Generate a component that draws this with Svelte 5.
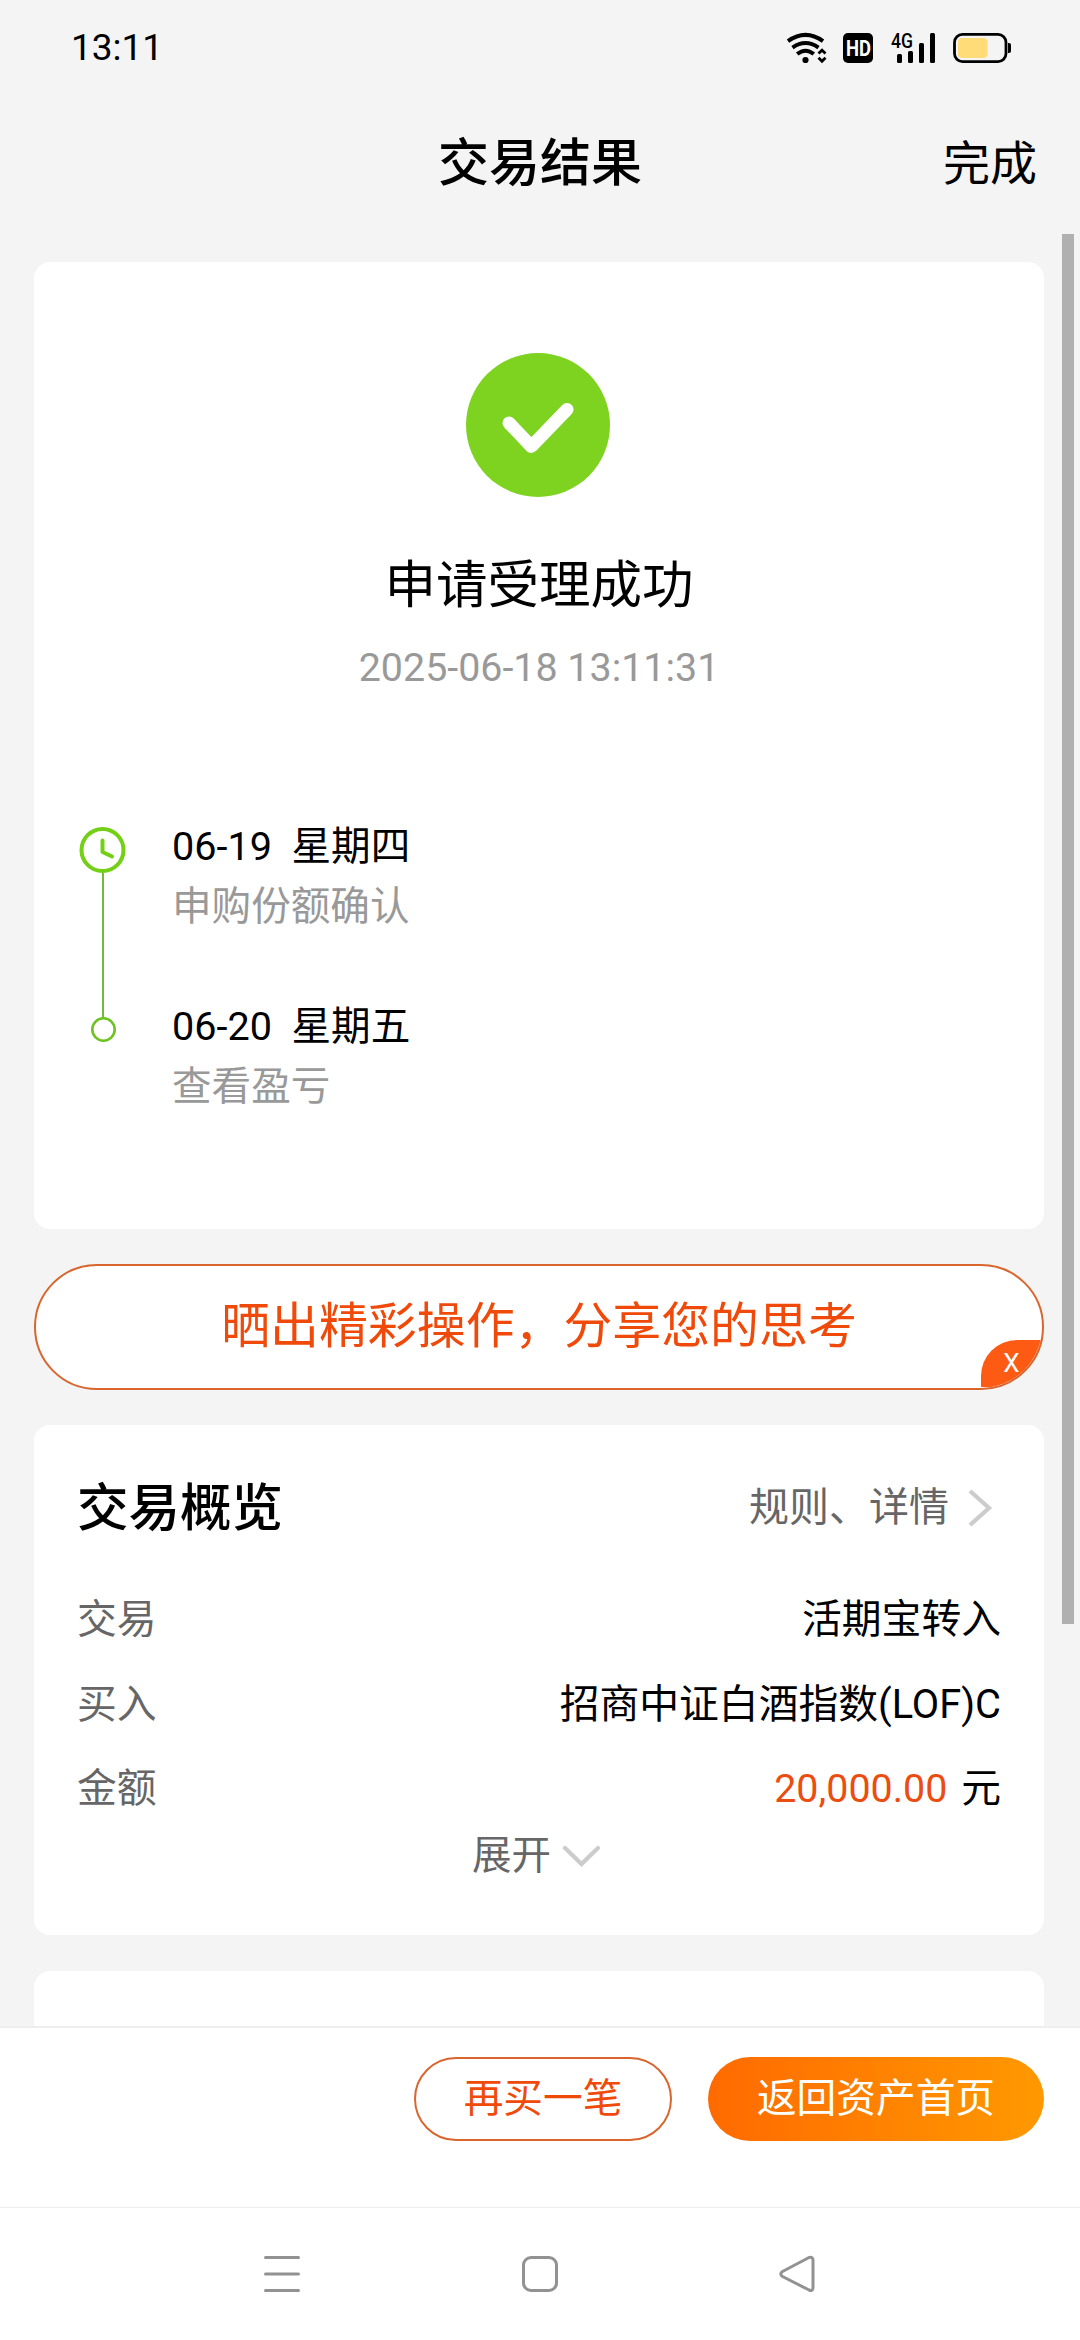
<style>
    :global(body) {
        background: #f4f4f4;
        font-family: Roboto, "Noto Sans CJK SC", sans-serif;
        color: #000;
    }
    .page {
        display: flex;
        flex-direction: column;
        width: 1080px;
        height: 2340px;
        overflow: hidden;
    }
    svg {
        display: block;
        flex: none;
        overflow: visible;
    }
    button {
        font-family: inherit;
        padding: 0;
        cursor: pointer;
    }

    .status {
        display: flex;
        justify-content: space-between;
        align-items: center;
        height: 96px;
        padding: 0 68px 0 71px;
    }
    .time {
        font-size: 37px;
        line-height: 44px;
    }
    .status-icons {
        display: flex;
        align-items: center;
        gap: 18px;
    }

    .header {
        display: grid;
        grid-template-columns: 1fr auto 1fr;
        align-items: center;
        height: 136px;
        padding: 0 43px;
        margin-bottom: 2px;
    }
    .header h1 {
        grid-column: 2;
        margin: 0;
        font-size: 51px;
        font-weight: 500;
        line-height: 60px;
    }
    .done {
        justify-self: end;
        border: none;
        background: transparent;
        font-size: 47px;
        line-height: 60px;
        color: #000;
    }

    .content {
        position: relative;
        display: flex;
        flex-direction: column;
        height: 1792px;
        flex: none;
        box-sizing: border-box;
        padding: 28px 36px 0 34px;
        overflow: hidden;
    }
    .scrollbar {
        position: absolute;
        top: 0;
        right: 6px;
        width: 12px;
        height: 1390px;
        background: #b0b0b0;
    }
    .card {
        flex: none;
        box-sizing: border-box;
        background: #fff;
        border-radius: 16px;
    }

    .result {
        display: flex;
        flex-direction: column;
        align-items: center;
        height: 967px;
        padding-top: 91px;
    }
    .result h2 {
        margin: 59px 0 28px;
        font-size: 51.5px;
        font-weight: 400;
        line-height: 60px;
    }
    .stamp {
        font-size: 39.4px;
        line-height: 48px;
        color: #999;
    }
    .steps {
        align-self: stretch;
        margin: 125px 0 0;
        padding: 0 0 0 45px;
        list-style: none;
    }
    .step {
        display: flex;
        gap: 45px;
        height: 180px;
    }
    .rail {
        display: flex;
        flex-direction: column;
        align-items: center;
        width: 48px;
        padding-top: 10px;
    }
    .step:last-child .rail {
        padding-top: 20px;
    }
    .line {
        width: 2px;
        flex: 1;
        margin-bottom: -21px;
        background: #74b83c;
    }
    .step-text {
        font-size: 39.6px;
        line-height: 60px;
    }
    .date {
        white-space: pre;
    }
    .note {
        color: #999;
    }

    .share {
        position: relative;
        flex: none;
        box-sizing: border-box;
        height: 126px;
        margin: 35px 0;
        border: 2px solid #d9652f;
        border-radius: 63px;
        background: #fff;
        overflow: hidden;
        font-size: 48.9px;
        line-height: 122px;
        text-align: center;
        color: #f04a0a;
    }
    .close {
        position: absolute;
        right: 0;
        bottom: 1px;
        width: 61px;
        height: 47px;
        box-sizing: border-box;
        border: none;
        border-radius: 36px 0 0 0;
        background: #fd5b14;
        color: #fff;
        font-size: 26px;
        line-height: 47px;
    }

    .overview {
        height: 510px;
        padding: 41px 43px 0 43px;
        margin-bottom: 36px;
    }
    .overview-head {
        display: flex;
        justify-content: space-between;
        align-items: center;
        height: 86px;
        margin-bottom: 26px;
    }
    .overview h2 {
        margin: 0;
        font-size: 51.5px;
        font-weight: 500;
        line-height: 60px;
    }
    .rules {
        display: flex;
        align-items: center;
        gap: 19px;
        padding-right: 9px;
        margin-top: -2px;
        font-size: 40px;
        line-height: 48px;
        color: #666;
    }
    .row {
        display: flex;
        justify-content: space-between;
        font-size: 39.8px;
        line-height: 84.5px;
    }
    .row .label {
        color: #666;
    }
    .money {
        margin-right: 4px;
        font-size: 39.4px;
        color: #eb4d10;
    }
    .expand {
        display: flex;
        justify-content: center;
        align-items: center;
        gap: 12px;
        height: 48px;
        padding-right: 6px;
        font-size: 39.5px;
        line-height: 48px;
        color: #666;
    }
    .next {
        height: 120px;
    }

    .actions {
        display: flex;
        justify-content: flex-end;
        gap: 36px;
        height: 181px;
        box-sizing: border-box;
        padding: 29px 36px 0;
        border-top: 2px solid #eee;
        background: #fff;
    }
    .btn {
        box-sizing: border-box;
        height: 84px;
        border-radius: 42px;
        font-size: 39.7px;
        line-height: 80px;
    }
    .again {
        width: 258px;
        border: 2px solid #d9652f;
        background: #fff;
        color: #f04a0a;
    }
    .home {
        width: 336px;
        border: none;
        background: linear-gradient(90deg, #ff6a00, #ff9900);
        color: #fff;
    }

    .system-nav {
        display: flex;
        justify-content: center;
        gap: 218px;
        flex: 1;
        padding-top: 46px;
        border-top: 1px solid #eee;
        background: #fff;
    }
</style>

<script>
    const steps = [
        {date: '06-19', day: '星期四', note: '申购份额确认'},
        {date: '06-20', day: '星期五', note: '查看盈亏'},
    ]

    const rows = [
        {label: '交易', value: '活期宝转入'},
        {label: '买入', value: '招商中证白酒指数(LOF)C'},
        {label: '金额', money: '20,000.00', value: '元'},
    ]
</script>

<div class="page">
    <div class="status">
        <span class="time">13:11</span>
        <div class="status-icons">
            <svg width="38" height="30" viewBox="0 0 38 30" fill="none" stroke="#000" stroke-width="4">
                <path d="M1 8.2Q18.5 -4.4 36 8.2" />
                <path d="M5.5 14.6Q18.5 5.4 31.5 14.6" />
                <path d="M10.2 21Q18.5 14.4 26.8 21" />
                <circle cx="18.5" cy="27" r="3.1" fill="#000" stroke="none" />
                <path d="M31.5 20.5l3.5-3.3 3.5 3.3M31.5 24.8l3.5 3.5 3.5-3.5" stroke-width="2.8" />
            </svg>
            <svg width="30" height="30" viewBox="0 0 30 30">
                <rect width="30" height="30" rx="5" fill="#000" />
                <text x="3" y="22.5" font-size="21.5" font-weight="700" textLength="25" lengthAdjust="spacingAndGlyphs" fill="#fff">HD</text>
            </svg>
            <svg width="44" height="30" viewBox="0 0 44 30">
                <text x="0" y="14.5" font-size="19.5" font-weight="500" textLength="22" lengthAdjust="spacingAndGlyphs">4G</text>
                <rect x="6" y="21" width="5" height="9" rx="1.5" />
                <rect x="17" y="18" width="5" height="12" rx="1.5" />
                <rect x="28" y="10" width="5" height="20" rx="1.5" />
                <rect x="39" y="0" width="5" height="30" rx="1.5" />
            </svg>
            <svg width="59" height="30" viewBox="0 0 59 30">
                <rect x="1.5" y="1.4" width="51.5" height="27.2" rx="8" fill="none" stroke="#000" stroke-width="2.8" />
                <rect x="5" y="5" width="29.5" height="20" rx="4" fill="#ffdc78" />
                <path d="M55 10h1a2 2 0 0 1 2 2v6a2 2 0 0 1-2 2h-1z" />
            </svg>
        </div>
    </div>

    <div class="header">
        <h1>交易结果</h1>
        <button class="done">完成</button>
    </div>

    <div class="content">
        <div class="card result">
            <svg width="146" height="144" viewBox="0 0 146 144">
                <circle cx="72" cy="72" r="72" fill="#7ed321" />
                <path d="M43 70l22.3 23.4L101 56.5" fill="none" stroke="#fff" stroke-width="13" stroke-linecap="round" stroke-linejoin="round" />
            </svg>
            <h2>申请受理成功</h2>
            <div class="stamp">2025-06-18 13:11:31</div>
            <ul class="steps">
                {#each steps as step, i}
                    <li class="step">
                        <div class="rail">
                            {#if i === 0}
                                <svg width="46" height="46" viewBox="0 0 46 46" fill="none" stroke="#74cf17" stroke-width="4">
                                    <circle cx="22.5" cy="23" r="21" />
                                    <path d="M22.5 13.5v11.5l9.5 4.5" stroke-linecap="round" stroke-linejoin="round" />
                                </svg>
                                <div class="line"></div>
                            {:else}
                                <svg width="25" height="25" viewBox="0 0 25 25">
                                    <circle cx="12.5" cy="12.5" r="11.2" fill="#fff" stroke="#6ec322" stroke-width="2.6" />
                                </svg>
                            {/if}
                        </div>
                        <div class="step-text">
                            <div class="date">{step.date + '  ' + step.day}</div>
                            <div class="note">{step.note}</div>
                        </div>
                    </li>
                {/each}
            </ul>
        </div>

        <div class="share">
            晒出精彩操作，分享您的思考
            <button class="close">X</button>
        </div>

        <div class="card overview">
            <div class="overview-head">
                <h2>交易概览</h2>
                <div class="rules">
                    <span>规则、详情</span>
                    <svg width="24" height="38" viewBox="0 0 24 38">
                        <path d="M2 2l19 17L2 36" fill="none" stroke="#ccc" stroke-width="4.2" />
                    </svg>
                </div>
            </div>
            {#each rows as row}
                <div class="row">
                    <span class="label">{row.label}</span>
                    <span>{#if row.money}<span class="money">{row.money}</span>&nbsp;{/if}{row.value}</span>
                </div>
            {/each}
            <div class="expand">
                <span>展开</span>
                <svg width="37" height="20" viewBox="0 0 37 20">
                    <path d="M2 2l16.5 16L35 2" fill="none" stroke="#ccc" stroke-width="4.2" stroke-linecap="round" />
                </svg>
            </div>
        </div>

        <div class="card next"></div>
        <div class="scrollbar"></div>
    </div>

    <div class="actions">
        <button class="btn again">再买一笔</button>
        <button class="btn home">返回资产首页</button>
    </div>

    <div class="system-nav">
        <svg width="40" height="40" viewBox="0 0 40 40" fill="none" stroke="#929292" stroke-width="3" stroke-linecap="round">
            <path d="M3.5 3.5h33M3.5 20h33M3.5 36.5h33" />
        </svg>
        <svg width="40" height="40" viewBox="0 0 40 40" fill="none" stroke="#929292" stroke-width="3">
            <rect x="3.5" y="3.5" width="33" height="33" rx="7.5" />
        </svg>
        <svg width="40" height="40" viewBox="0 0 40 40" fill="none" stroke="#929292" stroke-width="3" stroke-linejoin="round">
            <path d="M4.5 17.5L31 3.5Q35 2.500 35 6.5V33.5Q35 37.5 31 36L4.5 22.5Q1 20 4.5 17.5Z" />
        </svg>
    </div>
</div>
